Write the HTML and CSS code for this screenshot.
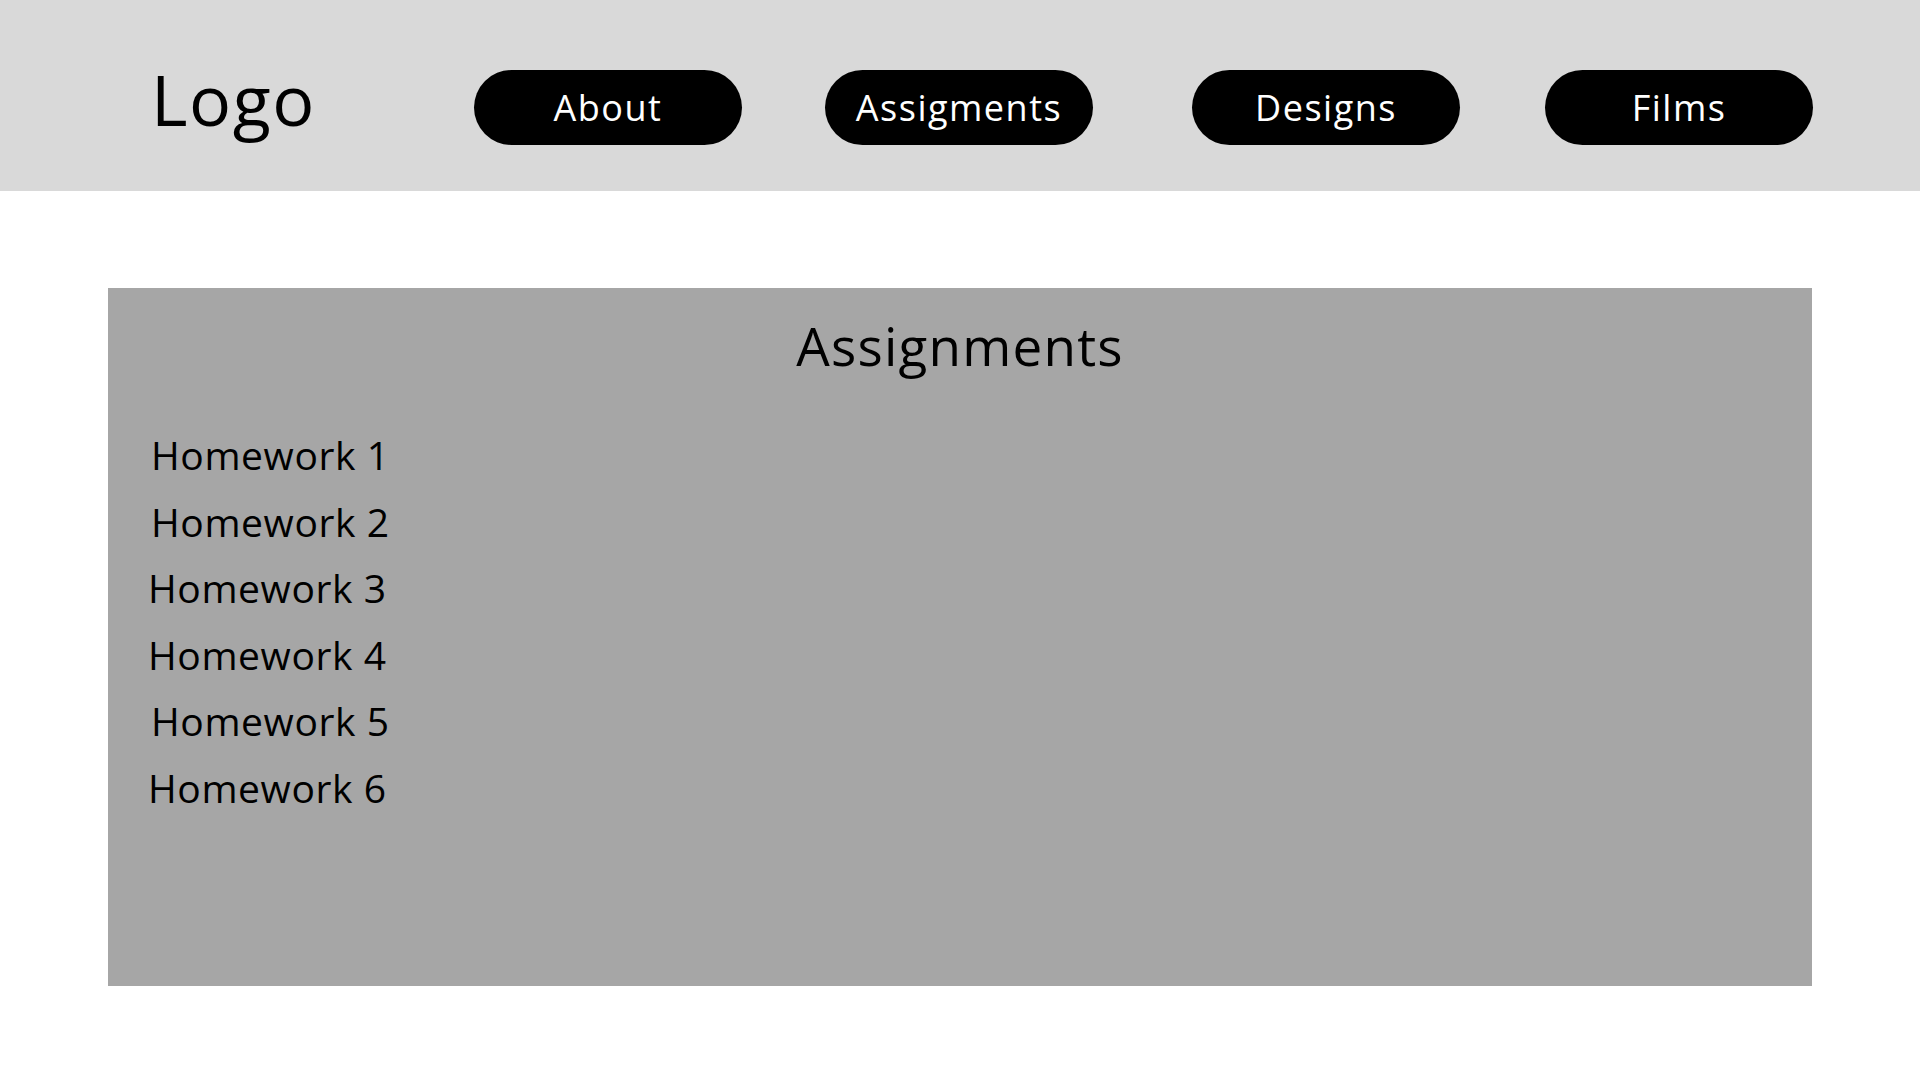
FILE: index.html
```html
<!DOCTYPE html>
<html lang="en">
<head>
    <meta charset="UTF-8">
    <meta name="viewport" content="width=device-width, initial-scale=1.0">
    <title>Assignments</title>
    <link rel="stylesheet" href="styles.css">
</head>
<body>
    <header class="top-bar">
        <div class="logo">Logo</div>
        <nav class="nav">
            <a class="nav-btn" href="#">About</a>
            <a class="nav-btn" href="#">Assigments</a>
            <a class="nav-btn designs" href="#">Designs</a>
            <a class="nav-btn films" href="#">Films</a>
        </nav>
    </header>

    <main class="panel">
        <h1 class="panel-title">Assignments</h1>
        <ul class="hw-list">
            <li>Homework 1</li>
            <li>Homework 2</li>
            <li class="shift-left">Homework 3</li>
            <li class="shift-left">Homework 4</li>
            <li>Homework 5</li>
            <li class="shift-left">Homework 6</li>
        </ul>
    </main>
</body>
</html>
```

FILE: styles.css
```css
body {
    margin: 0;
    font-family: 'Open Sans', 'Noto Sans', sans-serif;
    background: #ffffff;
    color: #000;
}

.top-bar {
    height: 191px;
    background: #d9d9d9;
    display: flex;
    align-items: flex-start;
    padding-left: 151px;
}

.logo {
    width: 323px;
    font-size: 70px;
    line-height: 1;
    letter-spacing: 1.5px;
    margin-top: 64px;
}

.nav {
    display: flex;
    gap: 83px;
    margin-top: 70px;
}

.nav-btn {
    width: 268px;
    height: 75px;
    border-radius: 38px;
    background: #000;
    color: #fff;
    text-decoration: none;
    font-size: 36px;
    line-height: 1;
    letter-spacing: 1.5px;
    display: flex;
    align-items: center;
    justify-content: center;
}

.designs {
    margin-left: 16px;
}

.films {
    margin-left: 2px;
}

.panel {
    margin: 97px 0 0 108px;
    width: 1704px;
    height: 667px;
    padding-top: 31px;
    background: #a6a6a6;
}

.panel-title {
    margin: 0;
    font-size: 53px;
    font-weight: normal;
    line-height: 1;
    letter-spacing: 1.2px;
    text-align: center;
}

.hw-list {
    list-style: none;
    margin: 50px 0 0;
    padding: 0 0 0 43px;
    font-size: 39px;
    line-height: 66.6px;
    letter-spacing: 0.6px;
}

.shift-left {
    margin-left: -3px;
}
```
